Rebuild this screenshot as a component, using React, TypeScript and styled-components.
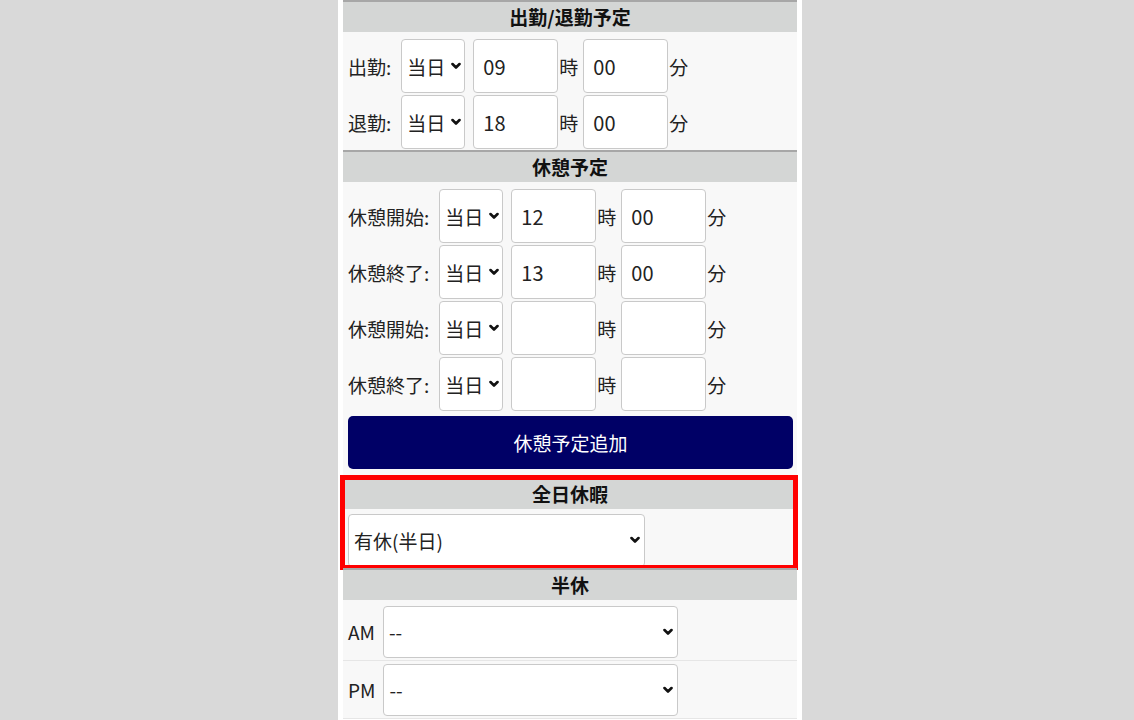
import * as React from 'react';
import styled, { createGlobalStyle } from 'styled-components';

const GlobalStyle = createGlobalStyle`
  html, body {
    margin: 0;
    padding: 0;
    height: 100%;
    overflow: hidden;
    background: #d9d9d9;
  }
  body {
    font-family: "Noto Sans CJK JP", "Noto Sans", sans-serif;
    color: #222;
  }
`;

const Page = styled.div`
  display: flex;
  justify-content: center;
  padding-left: 6px;
  min-height: 720px;
`;

const Panel = styled.div`
  width: 454px;
  padding: 0 5px;
  background: #ffffff;
  min-height: 720px;
`;

const Section = styled.section`
  position: relative;
  border-top: 2px solid #a7a7a7;
  background: #f8f8f8;
`;

const SectionHeader = styled.div`
  height: 30px;
  line-height: 30px;
  background: #d4d6d5;
  text-align: center;
  font-size: 19px;
  font-weight: bold;
  color: #111;
`;

interface BodyProps {
  $padTop: number;
  $padBottom?: number;
}

const SectionBody = styled.div<BodyProps>`
  padding: ${(p: BodyProps) => p.$padTop}px 0 ${(p: BodyProps) => p.$padBottom || 0}px;
`;

interface RowProps {
  $height: number;
  $divided?: boolean;
}

const Row = styled.div<RowProps>`
  display: flex;
  align-items: center;
  height: ${(p: RowProps) => p.$height}px;
  padding-left: 5px;
  border-bottom: ${(p: RowProps) => (p.$divided ? '1px solid #e6e6e6' : 'none')};
`;

interface LabelProps {
  $gap: number;
}

const Label = styled.span<LabelProps>`
  font-size: 19px;
  white-space: nowrap;
  margin-right: ${(p: LabelProps) => p.$gap}px;
`;

interface SelectWrapProps {
  $width: number;
  $height: number;
}

const SelectWrap = styled.div<SelectWrapProps>`
  position: relative;
  flex: none;
  width: ${(p: SelectWrapProps) => p.$width}px;
  height: ${(p: SelectWrapProps) => p.$height}px;
`;

const NativeSelect = styled.select`
  appearance: none;
  -webkit-appearance: none;
  box-sizing: border-box;
  width: 100%;
  height: 100%;
  margin: 0;
  padding: 0 0 0 5px;
  border: 1px solid #c9c9c9;
  border-radius: 4px;
  background: #fff;
  font-family: inherit;
  font-size: 19px;
  color: #222;
  outline: none;
`;

interface ChevronProps {
  $right: number;
}

const Chevron = styled.svg<ChevronProps>`
  position: absolute;
  right: ${(p: ChevronProps) => p.$right}px;
  top: 50%;
  transform: translateY(-50%);
  pointer-events: none;
`;

const TimeInput = styled.input`
  flex: none;
  box-sizing: border-box;
  width: 85px;
  height: 54px;
  margin: 0 0 0 8px;
  padding: 0 0 0 9px;
  border: 1px solid #c9c9c9;
  border-radius: 4px;
  background: #fff;
  font-family: inherit;
  font-size: 20px;
  color: #222;
  outline: none;
`;

interface UnitProps {
  $after: number;
}

const Unit = styled.span<UnitProps>`
  font-size: 19px;
  margin: 0 ${(p: UnitProps) => p.$after}px 0 1px;
`;

const AddButton = styled.button`
  display: block;
  width: 445px;
  height: 53px;
  margin: 4px 0 0 5px;
  border: none;
  border-radius: 5px;
  background: #000066;
  color: #fff;
  font-family: inherit;
  font-size: 19px;
`;

const Highlight = styled.div`
  position: absolute;
  top: -4px;
  bottom: -2px;
  left: -3px;
  right: -1px;
  border: 5px solid #ff0000;
  pointer-events: none;
`;

const DropDown = (props: { width: number; height: number; value: string; options: string[]; right: number }) => (
  <SelectWrap $width={props.width} $height={props.height}>
    <NativeSelect defaultValue={props.value}>
      {props.options.map((o) => (
        <option key={o} value={o}>{o}</option>
      ))}
    </NativeSelect>
    <Chevron $right={props.right} width="10" height="7" viewBox="0 0 10 7">
      <path d="M1.5 1.5 L5 5 L8.5 1.5" fill="none" stroke="#111" strokeWidth="2.6" strokeLinecap="round" strokeLinejoin="round" />
    </Chevron>
  </SelectWrap>
);

const TimeRow = (props: { label: string; hour: string; minute: string }) => (
  <Row $height={56}>
    <Label $gap={10}>{props.label}</Label>
    <DropDown width={64} height={54} value="当日" options={['当日', '翌日']} right={4} />
    <TimeInput defaultValue={props.hour} />
    <Unit $after={5}>時</Unit>
    <TimeInput defaultValue={props.minute} style={{ marginLeft: 0 }} />
    <Unit $after={0}>分</Unit>
  </Row>
);

const breaks = [
  { label: '休憩開始:', hour: '12', minute: '00' },
  { label: '休憩終了:', hour: '13', minute: '00' },
  { label: '休憩開始:', hour: '', minute: '' },
  { label: '休憩終了:', hour: '', minute: '' },
];

const halfOptions = ['--', '有休(半日)', '代休(半日)'];

export default function App() {
  return (
    <>
      <GlobalStyle />
      <Page>
        <Panel>
          <Section>
            <SectionHeader>出勤/退勤予定</SectionHeader>
            <SectionBody $padTop={6}>
              <TimeRow label="出勤:" hour="09" minute="00" />
              <TimeRow label="退勤:" hour="18" minute="00" />
            </SectionBody>
          </Section>

          <Section>
            <SectionHeader>休憩予定</SectionHeader>
            <SectionBody $padTop={6} $padBottom={8}>
              {breaks.map((b, i) => (
                <TimeRow key={i} label={b.label} hour={b.hour} minute={b.minute} />
              ))}
              <AddButton type="button">休憩予定追加</AddButton>
            </SectionBody>
          </Section>

          <Section>
            <SectionHeader>全日休暇</SectionHeader>
            <SectionBody $padTop={3}>
              <Row $height={56}>
                <DropDown width={297} height={53} value="有休(半日)" options={['--', '有休(全日)', '有休(半日)']} right={5} />
              </Row>
            </SectionBody>
            <Highlight />
          </Section>

          <Section>
            <SectionHeader>半休</SectionHeader>
            <SectionBody $padTop={3}>
              <Row $height={57} $divided>
                <Label $gap={8}>AM</Label>
                <DropDown width={295} height={52} value="--" options={halfOptions} right={5} />
              </Row>
              <Row $height={57} $divided>
                <Label $gap={8}>PM</Label>
                <DropDown width={295} height={52} value="--" options={halfOptions} right={5} />
              </Row>
            </SectionBody>
          </Section>
        </Panel>
      </Page>
    </>
  );
}
